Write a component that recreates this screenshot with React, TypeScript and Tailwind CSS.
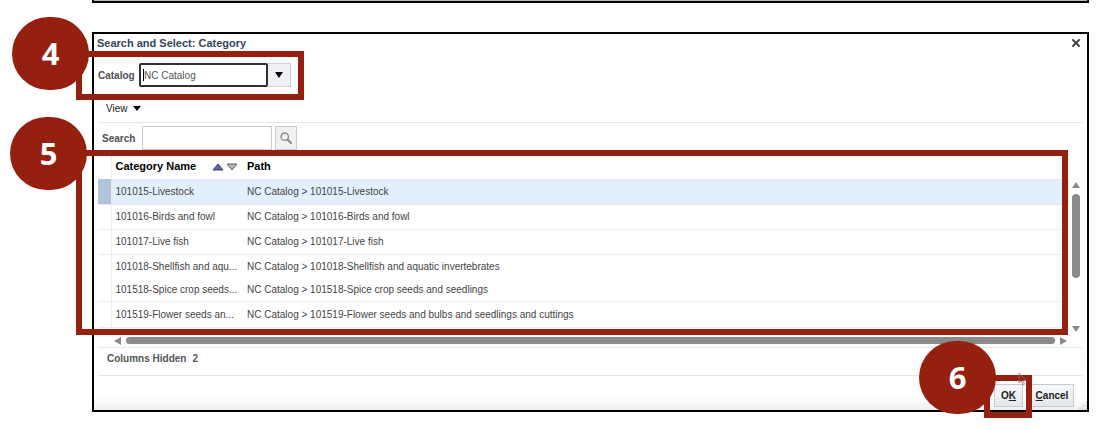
import type { ReactNode } from "react";
import { X } from "lucide-react";

const ROWS = [
  { name: "101015-Livestock", path: "NC Catalog > 101015-Livestock", height: "h-[25px]", line: "border-[#dfe9f3]" },
  { name: "101016-Birds and fowl", path: "NC Catalog > 101016-Birds and fowl", height: "h-[25px]", line: "border-[#ececec]" },
  { name: "101017-Live fish", path: "NC Catalog > 101017-Live fish", height: "h-[25px]", line: "border-[#ececec]" },
  { name: "101018-Shellfish and aqu...", path: "NC Catalog > 101018-Shellfish and aquatic invertebrates", height: "h-6", line: "border-transparent" },
  { name: "101518-Spice crop seeds...", path: "NC Catalog > 101518-Spice crop seeds and seedlings", height: "h-[23px]", line: "border-[#ececec]" },
  { name: "101519-Flower seeds an...", path: "NC Catalog > 101519-Flower seeds and bulbs and seedlings and cuttings", height: "h-[26px]", line: "border-[#ececec]" },
];

function Triangle({ dir, className }: { dir: "up" | "down" | "left" | "right"; className: string }) {
  const points = {
    up: "0,8 4,0 8,8",
    down: "0,0 8,0 4,8",
    left: "8,0 8,8 0,4",
    right: "0,0 8,4 0,8",
  };
  return (
    <svg viewBox="0 0 8 8" preserveAspectRatio="none" className={className} aria-hidden="true">
      <polygon points={points[dir]} fill="currentColor" />
    </svg>
  );
}

// Red numbered step: a frame around a control with a disc hanging off its corner
function Callout({ step, frame, disc }: { step: number; frame: string; disc: string }) {
  return (
    <div className={`pointer-events-none absolute z-10 border-[6px] border-[#96200f] ${frame}`}>
      <div
        className={`absolute flex h-[73px] w-[77px] items-center justify-center rounded-full bg-[#96200f] text-white ${disc}`}
      >
        <span className="font-['Open_Sans','Lato',sans-serif] text-[31px] font-bold">{step}</span>
      </div>
    </div>
  );
}

function FooterButton({ children, className }: { children: ReactNode; className: string }) {
  return (
    <button
      type="button"
      className={`h-[23px] border border-[#c6cbd1] bg-linear-to-b from-[#f7f8f9] to-[#e4e8ec] text-[10px] font-bold text-[#222] ${className}`}
    >
      {children}
    </button>
  );
}

export default function App() {
  return (
    <div className="overflow-hidden bg-white pb-[18px] pl-[92px] pr-[14px] font-['Liberation_Sans',Arial,sans-serif] text-[10px] text-[#444]">
      <div className="h-[3px] border-x-2 border-b-2 border-black bg-[#b9bdb6]" />

      <section aria-label="Search and Select: Category" className="mt-[29px] border-2 border-black">
        <header className="flex h-[18px] items-center justify-between pl-[3px] pr-[5px]">
          <h1 className="text-[11px] font-bold text-[#34455a]">Search and Select: Category</h1>
          <button type="button" aria-label="Close" className="text-[#444]">
            <X size={12} strokeWidth={4} />
          </button>
        </header>

        <div className="relative flex items-center pb-[13px] pl-1 pt-[11px]">
          <label htmlFor="catalog" className="w-[41px] font-bold text-[#505050]">Catalog</label>
          <div className="relative">
            <input
              id="catalog"
              defaultValue="NC Catalog"
              className="h-6 w-[129px] rounded-xs border-2 border-[#2e3238] bg-white pl-[3px] text-[#555] outline-none"
            />
            <span className="absolute left-1 top-[6px] h-3 w-px bg-black" />
          </div>
          <button
            type="button"
            aria-label="Show catalogs"
            className="flex h-6 w-[23px] items-center justify-center border border-l-0 border-[#cfd3d8] bg-[#eef0f3] text-black"
          >
            <Triangle dir="down" className="h-[6px] w-2" />
          </button>
          <Callout step={4} frame="-left-[18px] -top-px h-[49px] w-[228px]" disc="-left-[70px] -top-[40px]" />
        </div>

        <div className="mx-1 border-b border-[#e6e6e6] pb-[6px] pl-2">
          <button type="button" className="flex h-4 items-center gap-[5px] text-[#222]">
            View
            <Triangle dir="down" className="h-[5px] w-2 text-black" />
          </button>
        </div>

        <div className="flex items-center pl-2 pt-[3px]">
          <label htmlFor="search" className="w-10 font-bold text-[#505050]">Search</label>
          <input id="search" className="h-6 w-[130px] border border-[#c9cdd2] bg-white px-1 outline-none" />
          <button
            type="button"
            aria-label="Search"
            className="ml-[3px] flex h-6 w-[22px] items-center justify-center border border-[#c9cdd2] bg-[#f0f1f3]"
          >
            <svg width="12" height="12" viewBox="0 0 12 12" fill="none" stroke="#8b8b8b">
              <circle cx="4.7" cy="4.7" r="3.7" strokeWidth="1.4" />
              <path d="M7.5 7.5L11 11" strokeWidth="2" strokeLinecap="round" />
            </svg>
          </button>
        </div>

        <div className="relative flex px-1">
          <div className="min-w-0 flex-1 pb-[7px]">
            <table className="w-full table-fixed border-collapse text-left">
              <colgroup>
                <col className="w-[13px]" />
                <col className="w-[131px]" />
                <col />
              </colgroup>
              <thead>
                <tr className="h-[29px] text-[11px] text-black">
                  <th className="border-r border-[#ececec] p-0" />
                  <th className="p-0 pl-1 pt-1">
                    <div className="flex items-center justify-between pr-1">
                      Category Name
                      <span className="flex gap-[2px]">
                        <button type="button" aria-label="Sort ascending">
                          <svg width="12" height="8" viewBox="0 0 12 8">
                            <path d="M1 7L6 1L11 7Z" fill="#5468b4" stroke="#39405e" />
                          </svg>
                        </button>
                        <button type="button" aria-label="Sort descending">
                          <svg width="12" height="8" viewBox="0 0 12 8">
                            <path d="M1 1H11L6 7Z" fill="#b5b5b5" stroke="#666" />
                          </svg>
                        </button>
                      </span>
                    </div>
                  </th>
                  <th className="p-0 pl-[5px] pt-1">Path</th>
                </tr>
              </thead>
              <tbody>
                {ROWS.map((row, i) => (
                  <tr key={row.name} className={`border-b ${row.height} ${row.line} ${i === 0 ? "bg-[#e2f0fe]" : ""}`}>
                    <td className={`border-r border-[#ececec] p-0 ${i === 0 ? "bg-[#afc4da]" : ""}`} />
                    <td className="whitespace-nowrap p-0 pl-1">{row.name}</td>
                    <td className="whitespace-nowrap p-0 pl-[5px]">{row.path}</td>
                  </tr>
                ))}
              </tbody>
            </table>
          </div>

          {/* vertical scrollbar */}
          <div className="flex w-[14px] flex-col items-center pb-[3px] pt-8 text-[#8a8a8a]">
            <Triangle dir="up" className="h-[6px] w-2" />
            <div className="mt-[6px] h-[84px] w-2 rounded-full bg-[#8a8a8a]" />
            <Triangle dir="down" className="mt-auto h-[6px] w-2" />
          </div>
          <Callout step={5} frame="-left-[18px] right-[19px] top-0 h-[185px]" disc="-left-[72px] -top-[39px]" />
        </div>

        {/* horizontal scrollbar */}
        <div className="mx-1 flex h-[13px] items-center border-b border-[#e6e6e6] pl-4 pr-4 text-[#8a8a8a]">
          <Triangle dir="left" className="h-2 w-[7px]" />
          <div className="mx-[5px] h-[7px] flex-1 rounded-full bg-[#8a8a8a]" />
          <Triangle dir="right" className="h-2 w-[7px]" />
        </div>

        <div className="mx-1 flex gap-[6px] border-b border-[#e6e6e6] pb-[10px] pl-[9px] pt-1 font-bold leading-[13px] text-[#555]">
          <span>Columns Hidden</span>
          <span>2</span>
        </div>

        <footer className="relative flex justify-end gap-[7px] bg-linear-to-b from-white from-60% to-[#f0f0f0] pb-[3px] pr-[13px] pt-2">
          <div className="relative">
            <FooterButton className="w-[29px]">O<u>K</u></FooterButton>
            <Callout step={6} frame="-left-[10px] -top-[9px] h-[43px] w-12" disc="-left-[71px] -top-[40px]" />
            <svg width="9" height="14" viewBox="0 0 9 14" className="absolute left-6 -top-3 z-20" aria-hidden="true">
              <path d="M1 1V11L3.3 9L5 13L6.5 12.3L5 8.5H8Z" fill="none" stroke="#8f7773" strokeWidth="0.8" />
            </svg>
          </div>
          <FooterButton className="w-[44px]"><u>C</u>ancel</FooterButton>
          <svg width="8" height="8" viewBox="0 0 8 8" className="absolute bottom-0 right-0" stroke="#aaa" strokeDasharray="1 1" aria-hidden="true">
            <path d="M0 8L8 0M3 8L8 3M6 8L8 6" />
          </svg>
        </footer>
      </section>
    </div>
  );
}
